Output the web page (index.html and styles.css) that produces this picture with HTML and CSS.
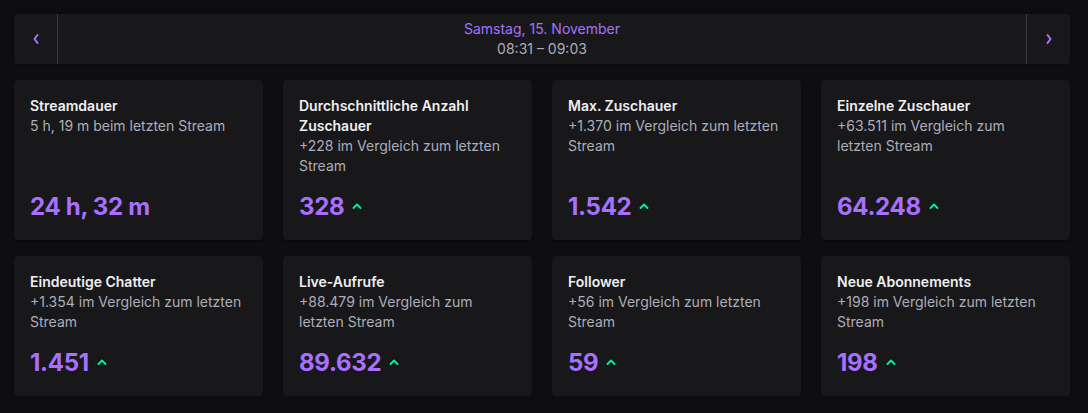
FILE: index.html
```html
<!DOCTYPE html>
<html lang="de">
<head>
<meta charset="utf-8">
<link rel="stylesheet" href="styles.css">
</head>
<body>
<div class="page">
  <div class="datebar">
    <button class="nav nav-left" aria-label="Zurück">
      <svg width="8" height="12" viewBox="0 0 8 12"><path d="M5.5 2 L2.5 6 L5.5 10" fill="none" stroke="#a970ff" stroke-width="2" stroke-linecap="round" stroke-linejoin="round"/></svg>
    </button>
    <div class="date">
      <div class="date-day">Samstag, 15. November</div>
      <div class="date-time">08:31 – 09:03</div>
    </div>
    <button class="nav nav-right" aria-label="Weiter">
      <svg width="8" height="12" viewBox="0 0 8 12"><path d="M2.5 2 L5.5 6 L2.5 10" fill="none" stroke="#a970ff" stroke-width="2" stroke-linecap="round" stroke-linejoin="round"/></svg>
    </button>
  </div>

  <div class="grid">
    <div class="card">
      <div class="title">Streamdauer</div>
      <div class="sub">5 h, 19 m beim letzten Stream</div>
      <div class="value"><span>24 h, 32 m</span></div>
    </div>
    <div class="card">
      <div class="title">Durchschnittliche Anzahl Zuschauer</div>
      <div class="sub">+228 im Vergleich zum letzten Stream</div>
      <div class="value"><span>328</span><svg class="up" width="10" height="6" viewBox="0 0 10 6"><path d="M1.5 5 L5 1.5 L8.5 5" fill="none" stroke="#00f593" stroke-width="1.8" stroke-linecap="round" stroke-linejoin="round"/></svg></div>
    </div>
    <div class="card">
      <div class="title">Max. Zuschauer</div>
      <div class="sub">+1.370 im Vergleich zum letzten Stream</div>
      <div class="value"><span>1.542</span><svg class="up" width="10" height="6" viewBox="0 0 10 6"><path d="M1.5 5 L5 1.5 L8.5 5" fill="none" stroke="#00f593" stroke-width="1.8" stroke-linecap="round" stroke-linejoin="round"/></svg></div>
    </div>
    <div class="card">
      <div class="title">Einzelne Zuschauer</div>
      <div class="sub">+63.511 im Vergleich zum letzten Stream</div>
      <div class="value"><span>64.248</span><svg class="up" width="10" height="6" viewBox="0 0 10 6"><path d="M1.5 5 L5 1.5 L8.5 5" fill="none" stroke="#00f593" stroke-width="1.8" stroke-linecap="round" stroke-linejoin="round"/></svg></div>
    </div>
    <div class="card">
      <div class="title">Eindeutige Chatter</div>
      <div class="sub">+1.354 im Vergleich zum letzten Stream</div>
      <div class="value"><span>1.451</span><svg class="up" width="10" height="6" viewBox="0 0 10 6"><path d="M1.5 5 L5 1.5 L8.5 5" fill="none" stroke="#00f593" stroke-width="1.8" stroke-linecap="round" stroke-linejoin="round"/></svg></div>
    </div>
    <div class="card">
      <div class="title">Live-Aufrufe</div>
      <div class="sub">+88.479 im Vergleich zum letzten Stream</div>
      <div class="value"><span>89.632</span><svg class="up" width="10" height="6" viewBox="0 0 10 6"><path d="M1.5 5 L5 1.5 L8.5 5" fill="none" stroke="#00f593" stroke-width="1.8" stroke-linecap="round" stroke-linejoin="round"/></svg></div>
    </div>
    <div class="card">
      <div class="title">Follower</div>
      <div class="sub">+56 im Vergleich zum letzten Stream</div>
      <div class="value"><span>59</span><svg class="up" width="10" height="6" viewBox="0 0 10 6"><path d="M1.5 5 L5 1.5 L8.5 5" fill="none" stroke="#00f593" stroke-width="1.8" stroke-linecap="round" stroke-linejoin="round"/></svg></div>
    </div>
    <div class="card">
      <div class="title">Neue Abonnements</div>
      <div class="sub">+198 im Vergleich zum letzten Stream</div>
      <div class="value"><span>198</span><svg class="up" width="10" height="6" viewBox="0 0 10 6"><path d="M1.5 5 L5 1.5 L8.5 5" fill="none" stroke="#00f593" stroke-width="1.8" stroke-linecap="round" stroke-linejoin="round"/></svg></div>
    </div>
  </div>
</div>
</body>
</html>
```

FILE: styles.css
```css
* { box-sizing: border-box; }

html, body {
  margin: 0;
  padding: 0;
  background: #0e0e10;
}

body {
  font-family: Inter, "Noto Sans", "Liberation Sans", sans-serif;
  color: #efeff1;
}

.page {
  width: 1056px;
  margin: 14px 0 0 14px;
  display: flex;
  flex-direction: column;
  gap: 16px;
}

.datebar {
  height: 50px;
  display: flex;
  align-items: stretch;
  background: #18181b;
  border-radius: 2px;
  box-shadow: 0 0 0 1px #0a0a0c;
}

.nav {
  width: 44px;
  flex: 0 0 44px;
  background: transparent;
  border: 0;
  padding: 0;
  display: flex;
  align-items: center;
  justify-content: center;
  cursor: pointer;
}

.nav-left { border-right: 1px solid #3a3a3d; }
.nav-right { border-left: 1px solid #3a3a3d; }

.date {
  flex: 1;
  display: flex;
  flex-direction: column;
  align-items: center;
  justify-content: center;
  line-height: 20px;
  font-size: 14px;
}

.date-day { color: #a970ff; }
.date-time { color: #adadb8; }

.grid {
  display: grid;
  grid-template-columns: repeat(4, 1fr);
  column-gap: 20px;
  row-gap: 16px;
}

.card {
  background: #18181b;
  border-radius: 4px;
  padding: 16px 18px 18px 16px;
  display: flex;
  flex-direction: column;
  box-shadow: 0 1px 2px rgba(0,0,0,0.5);
}

.title {
  font-size: 14px;
  font-weight: 600;
  line-height: 20px;
  color: #efeff1;
}

.sub {
  font-size: 14px;
  line-height: 19.5px;
  color: #adadb8;
}

.value {
  margin-top: auto;
  padding-top: 17px;
  display: flex;
  align-items: center;
  gap: 8px;
  font-size: 24px;
  font-weight: 700;
  line-height: 30px;
  color: #a970ff;
  letter-spacing: -0.3px;
}

.up { display: block; margin-top: -2px; }
```
